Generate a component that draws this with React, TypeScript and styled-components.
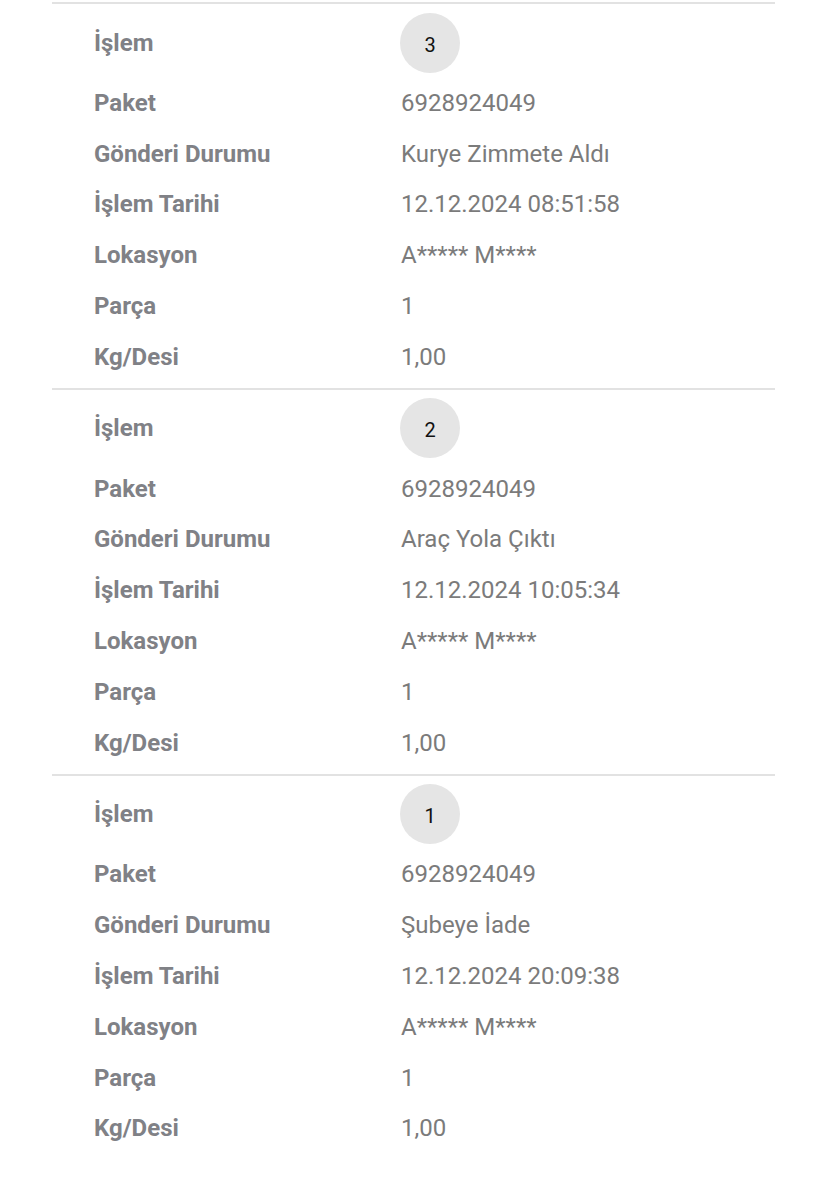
import React from "react";
import styled, { createGlobalStyle } from "styled-components";

const Global = createGlobalStyle`
  html, body { margin: 0; padding: 0; background: #ffffff; }
  body { font-family: Roboto, "Noto Sans", "Liberation Sans", sans-serif; }
`;

const Page = styled.div`
  padding: 2px 50px 0 52px;
`;

const Section = styled.section`
  border-top: 2px solid #e2e2e2;
  padding: 8px 0 6px 42px;
  display: grid;
  grid-template-columns: 307px 1fr;
  grid-template-rows: 65px;
  grid-auto-rows: 50.8px;
`;

const Label = styled.div<{ $first?: boolean }>`
  display: flex;
  align-items: center;
  font-size: 24px;
  font-weight: 700;
  color: #808186;
  padding-bottom: ${(p) => (p.$first ? "4px" : "0")};
  padding-top: ${(p) => (p.$first ? "0" : "1px")};
  box-sizing: border-box;
`;

const Value = styled.div<{ $first?: boolean }>`
  display: flex;
  align-items: center;
  font-size: 24px;
  font-weight: 400;
  color: #7b7b7b;
  padding-bottom: ${(p) => (p.$first ? "4px" : "0")};
  padding-top: ${(p) => (p.$first ? "0" : "1px")};
  box-sizing: border-box;
`;

const Badge = styled.div`
  width: 60px;
  height: 60px;
  border-radius: 50%;
  background: #e5e5e5;
  color: #111;
  font-size: 20px;
  display: flex;
  align-items: center;
  justify-content: center;
  margin-left: -1px;
  padding-top: 4px;
  box-sizing: border-box;
`;

type Entry = { n: number; status: string; date: string };

const entries: Entry[] = [
  { n: 3, status: "Kurye Zimmete Aldı", date: "12.12.2024 08:51:58" },
  { n: 2, status: "Araç Yola Çıktı", date: "12.12.2024 10:05:34" },
  { n: 1, status: "Şubeye İade", date: "12.12.2024 20:09:38" },
];

const Sec: React.FC<{ e: Entry }> = ({ e }) => {
  const rows: [string, string][] = [
    ["Paket", "6928924049"],
    ["Gönderi Durumu", e.status],
    ["İşlem Tarihi", e.date],
    ["Lokasyon", "A***** M****"],
    ["Parça", "1"],
    ["Kg/Desi", "1,00"],
  ];
  return (
    <Section>
      <Label $first>İşlem</Label>
      <Value $first>
        <Badge>{e.n}</Badge>
      </Value>
      {rows.map(([l, v]) => (
        <React.Fragment key={l}>
          <Label>{l}</Label>
          <Value>{v}</Value>
        </React.Fragment>
      ))}
    </Section>
  );
};

export default function App() {
  return (
    <>
      <Global />
      <Page>
        {entries.map((e) => (
          <Sec key={e.n} e={e} />
        ))}
      </Page>
    </>
  );
}
